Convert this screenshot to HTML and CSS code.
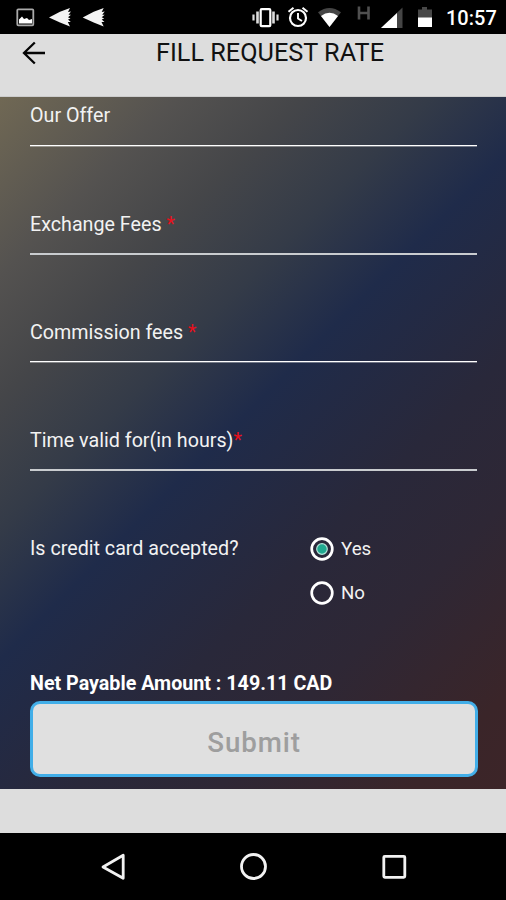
FILE: index.html
```html
<!DOCTYPE html>
<html lang="en">
<head>
<meta charset="utf-8">
<title>Fill Request Rate</title>
<link rel="stylesheet" href="styles.css">
</head>
<body>
<div class="status">
  <svg class="status-left" width="130" height="34" viewBox="0 0 130 34">
    <rect x="17.3" y="9.3" width="16" height="16" rx="1" fill="none" stroke="#aaa" stroke-width="1.8"/>
    <path d="M19 23.500v-4l3-3 2 2.500 3-1 2 2 3-1v4.500z" fill="#fff"/>
    <g fill="#f4f4f4"><path id="bird" d="M49 17.500 60 11.800 70 8l-2 4 3-.5-2.500 3.200 2.500 0-3 2.600 2.500 1.200-2.500 1 2.800 2.600-3-.2 2.200 4.600L60 22.500z"/><use href="#bird" x="33.7"/></g>
  </svg>
  <svg class="status-right" width="190" height="34" viewBox="250 0 190 34">
    <g fill="none" stroke="#fff">
      <rect x="260.700" y="9.200" width="9.600" height="17" rx="1" stroke-width="2.200"/>
      <path d="M257.500 11.500v12M273.500 11.500v12" stroke="#ddd" stroke-width="2.600"/>
      <path d="M253.500 14.500v6M277.500 14.500v6" stroke="#ddd" stroke-width="2.200"/>
      <circle cx="298" cy="18" r="8" stroke-width="2.2"/>
      <path d="M298 13v5.500l4 2.500" stroke-width="1.900"/>
      <path d="M288.500 11.800l5-4M307.500 11.800l-5-4" stroke-width="2"/>
    </g>
    <path d="M318 12.300Q329.500 3.500 341 12.300L329.500 27z" fill="#454545"/>
    <path d="M321 16Q329.500 9.500 338 16L329.500 27z" fill="#fff"/>
    <path d="M359 6.500v13M368.500 6.500v13M359 13h9.500" stroke="#505050" stroke-width="2.600"/>
    <path d="M402.500 7.500V28H381z" fill="#454545"/>
    <path d="M397 13V28H381z" fill="#fff"/>
    <path d="M418 9.500h4V7h5v2.500h5V18h-14z" fill="#484848"/>
    <path d="M418 17.500h14V27h-14z" fill="#fff"/>
  </svg>
  <span class="clock">10:57</span>
</div>
<header class="header">
  <svg class="back" width="24" height="24" viewBox="0 0 24 24"><path d="M23 12H2.500M12.800 1.500 2 12l10.800 10.500" fill="none" stroke="#050505" stroke-width="2.300"/></svg>
  <h1 class="title">FILL REQUEST RATE</h1>
</header>
<main class="form">
  <div class="field thin"><label class="label">Our Offer</label></div>
  <div class="field"><label class="label">Exchange Fees <span class="req">*</span></label></div>
  <div class="field thin"><label class="label">Commission fees <span class="req">*</span></label></div>
  <div class="field"><label class="label">Time valid for(in hours)<span class="req">*</span></label></div>
  <div class="question">
    <span class="label">Is credit card accepted?</span>
    <div class="options">
      <label class="option"><svg class="radio" width="24" height="24" viewBox="0 0 24 24"><circle cx="12" cy="12" r="10.300" fill="none" stroke="#fff" stroke-width="2.700"/><circle cx="12" cy="12" r="5.300" fill="#20a990" stroke="#b4e4da" stroke-width="1.200"/></svg>Yes</label>
      <label class="option"><svg class="radio" width="24" height="24" viewBox="0 0 24 24"><circle cx="12" cy="12" r="10.300" fill="none" stroke="#fff" stroke-width="2.700"/></svg>No</label>
    </div>
  </div>
  <p class="total">Net Payable Amount : 149.11 CAD</p>
  <button class="submit">Submit</button>
</main>
<div class="strip"></div>
<nav class="nav">
  <svg width="506" height="67" viewBox="0 833 506 67" fill="none" stroke="#f2f2f2" stroke-width="2.800">
    <path d="M103 867 123.200 855.200V878.300z" stroke-linejoin="round"/>
    <circle cx="253.500" cy="866.500" r="12"/>
    <rect x="383.800" y="856.300" width="21" height="21" rx="1"/>
  </svg>
</nav>
</body>
</html>
```

FILE: styles.css
```css
* { box-sizing: border-box; }
body { margin: 0; width: 506px; height: 900px; overflow: hidden; display: flex; flex-direction: column; background: #000; font-family: Roboto, "Liberation Sans", sans-serif; }
svg { display: block; flex: none; }
.status { height: 34px; flex: none; display: flex; justify-content: space-between; background: #000; color: #fff; }
.status-right { margin-left: 120px; }
.clock { width: 66px; padding-left: 6px; font-size: 20px; font-weight: 500; line-height: 37px; }
.header { height: 63px; flex: none; display: flex; align-items: flex-start; background: #ddd; border-bottom: 1px solid #ccc; }
.back { margin: 7px 0 0 22px; }
.title { margin: 4px 0 0 110px; font-size: 25.25px; line-height: 30px; font-weight: 400; color: #111; white-space: nowrap; }
.form { height: 692px; flex: none; padding: 0 29px 0 30px; color: #f2f2f2; background: linear-gradient(135deg, #706854 0%, #545250 15%, #454649 25%, #343b48 36%, #1f2b4a 47%, #29283a 64%, #2e2735 76%, #3a2529 92%, #3c2528 100%); }
.field { height: 108.25px; padding-top: 7.3px; }
.field::after { content: ""; display: block; height: 2px; margin-top: 16.4px; background: #c9cccf; }
.field.thin::after { height: 1px; background: #fff; box-shadow: 0 1px rgba(255, 255, 255, .35); }
.label { display: block; font-size: 19.7px; line-height: 24px; white-space: nowrap; }
.req { color: #e8101c; }
.question { display: flex; height: 136px; padding-top: 7.3px; }
.question > .label { width: 280px; }
.options { display: flex; flex-direction: column; gap: 20px; }
.option { display: flex; align-items: center; gap: 7px; height: 24px; font-size: 18.7px; }
.total { margin: 6px 0 5px; font-size: 19.7px; line-height: 24px; height: 24px; font-weight: 700; color: #fff; white-space: nowrap; }
.submit { display: block; width: 448px; height: 76px; border: 3px solid #42aee8; border-radius: 10px; background: #e0e0e0; color: #9e9e9e; font-family: inherit; font-size: 27.7px; font-weight: 500; letter-spacing: .9px; padding: 6px 0 0; }
.strip { height: 44px; flex: none; background: #ddd; }
.nav { height: 67px; flex: none; }
```
